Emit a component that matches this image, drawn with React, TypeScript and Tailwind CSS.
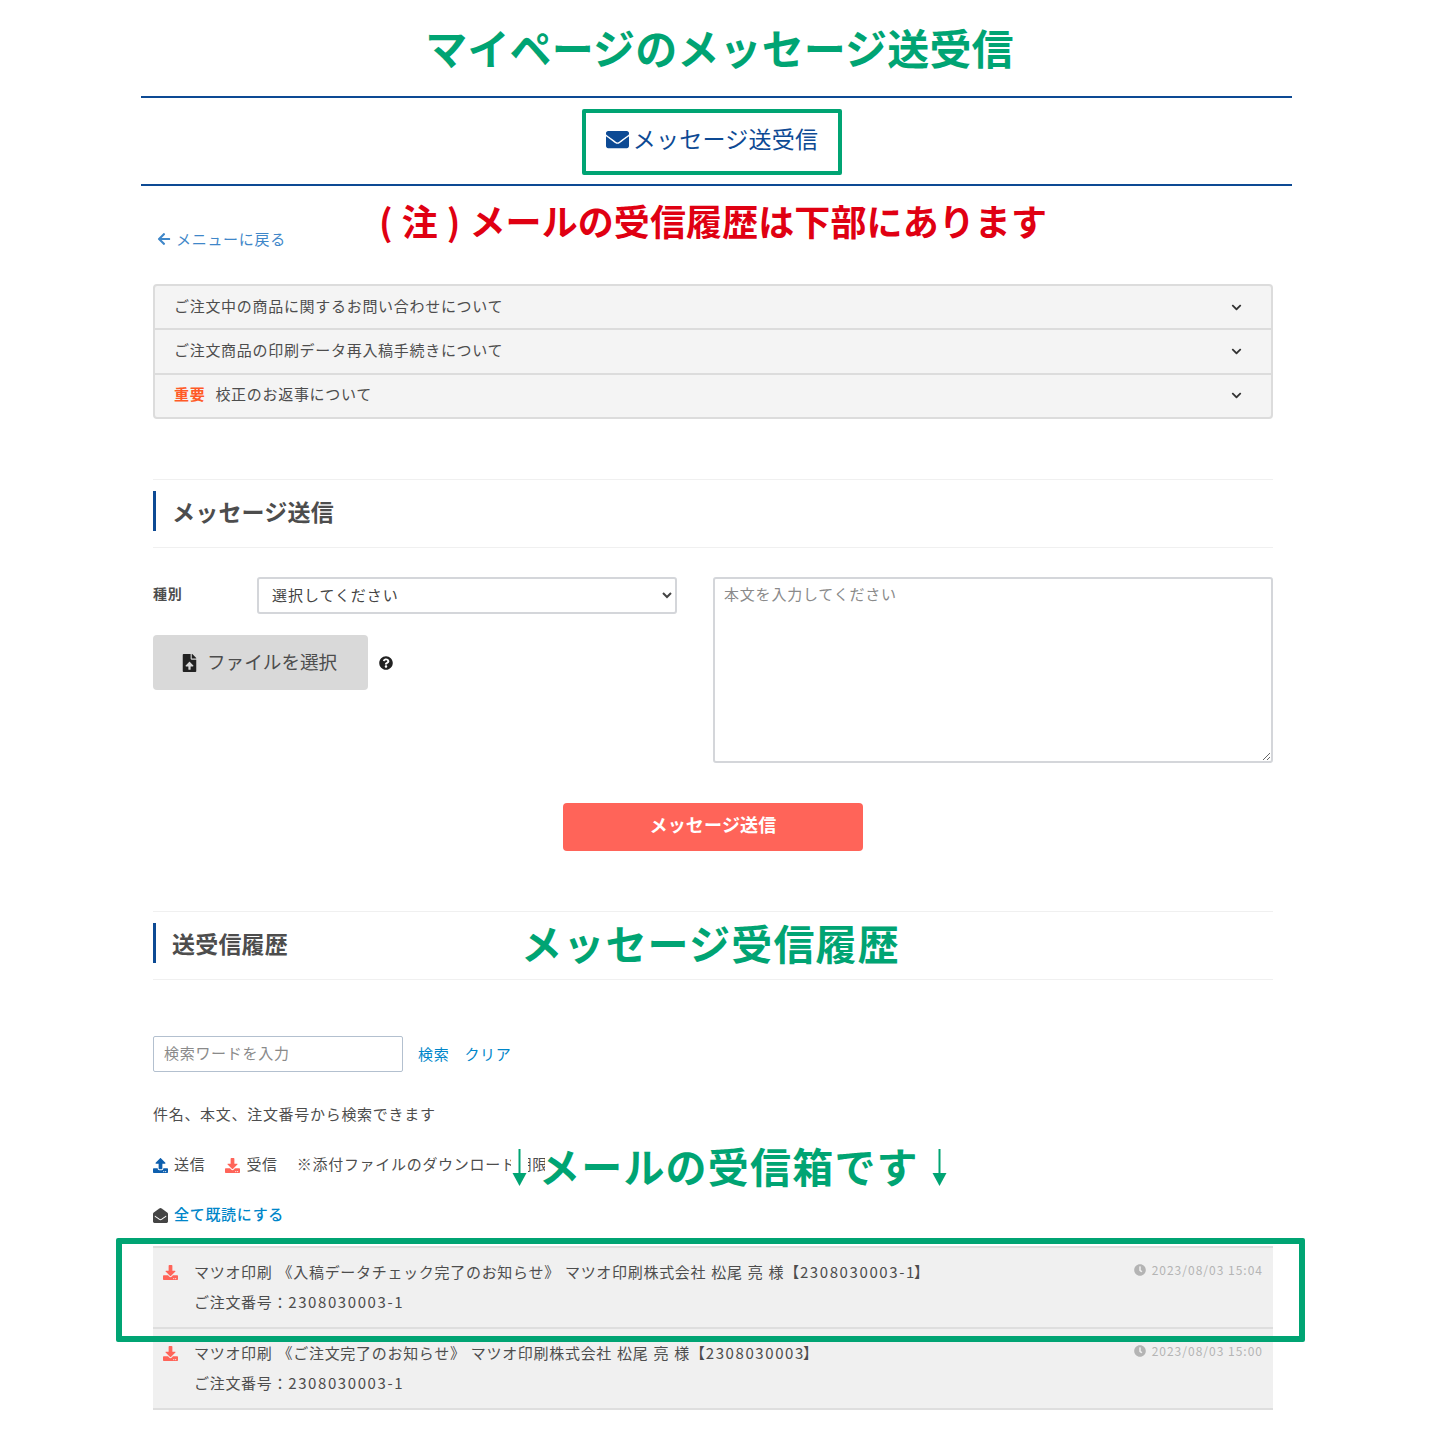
import React from 'react';
import { FaArrowLeft, FaChevronDown, FaClock, FaDownload, FaEnvelope, FaEnvelopeOpen, FaFileUpload, FaQuestionCircle, FaUpload } from 'react-icons/fa';

const messages = [
  { subject: 'マツオ印刷 《入稿データチェック完了のお知らせ》', number: '2308030003-1', date: '2023/08/03 15:04' },
  { subject: 'マツオ印刷 《ご注文完了のお知らせ》', number: '2308030003', date: '2023/08/03 15:00' }
];

function SectionHeading({ label }: { label: string }) {
  return <div className="h-[69px] border-y border-[#f0f0f0] flex items-center">
      <h2 className="mb-[6px] h-10 border-l-[3px] border-[#0d4a94] pl-[16px] pt-[2px] flex items-center text-[23px] font-bold tracking-[0.2px] text-[#4d4d4d]">
        {label}
      </h2>
    </div>;
}

function DownArrow() {
  return <svg width="17" height="38" viewBox="0 0 17 38" className="bg-white">
      <path d="M8.5 0v27" stroke="#00a473" strokeWidth="2" />
      <path d="M1.5 24h14l-7 13z" fill="#00a473" />
    </svg>;
}

export default function App() {
  return <div className="relative h-[1451px] w-[1441px] bg-white overflow-hidden font-['Noto_Sans_CJK_JP',sans-serif] text-[15px] tracking-[0.7px] text-[#4d4d4d]">
      <div className="ml-[141px] w-[1151px]">
        <h1 className="h-[96px] pb-[4px] pl-[6px] flex items-center justify-center text-[42px] font-bold tracking-[0.15px] text-[#00a473]">
          マイページのメッセージ送受信
        </h1>
        <div className="h-[90px] border-y-2 border-[#0d4a94] flex items-center justify-center">
          <div className="w-[260px] h-[66px] mt-[2px] mr-[9px] pb-[8px] border-4 border-[#00a473] rounded-[2px] flex items-center justify-center gap-[4px] text-[23px] tracking-[0.25px] text-[#0d4a94]">
            <FaEnvelope className="mt-[2px] w-[23px] h-[23px]" />
            <span>メッセージ送受信</span>
          </div>
        </div>

        <div className="ml-3 w-[1120px]">
          <a className="mt-[42px] h-[22px] flex items-center gap-[5px] ml-1 text-[#3f87c9]">
            <FaArrowLeft className="w-[14px] h-[14px]" />
            <span>メニューに戻る</span>
          </a>

          <div className="mt-[34px] h-[135px] border-2 border-[#dcdcdc] rounded-[4px] bg-[#f4f4f4] flex flex-col divide-y-2 divide-[#dcdcdc]">
            <div className="flex-1 flex items-center justify-between pl-[19px] pr-[29px]">
              <span className="mb-[1px]">ご注文中の商品に関するお問い合わせについて</span>
              <FaChevronDown className="w-[11px] h-[11px] text-[#333]" />
            </div>
            <div className="flex-1 flex items-center justify-between pl-[19px] pr-[29px]">
              <span className="mb-[3px]">ご注文商品の印刷データ再入稿手続きについて</span>
              <FaChevronDown className="w-[11px] h-[11px] text-[#333]" />
            </div>
            <div className="flex-1 flex items-center justify-between pl-[19px] pr-[29px]">
              <span className="mb-[3px]">
                <b className="mr-[10px] text-[#ff5a26]">重要</b>
                校正のお返事について
              </span>
              <FaChevronDown className="w-[11px] h-[11px] text-[#333]" />
            </div>
          </div>

          <div className="mt-[60px]">
            <SectionHeading label="メッセージ送信" />
          </div>

          <div className="mt-[29px] flex justify-between">
            <div className="w-[524px]">
              <div className="flex items-center">
                <label className="w-[104px] pb-[4px] text-[14px] font-bold">種別</label>
                <select defaultValue="" className="w-[420px] h-[37px] border-2 border-[#d4d6da] rounded-[3px] bg-white pl-[9px] pb-[2px] text-[15px] tracking-[0.95px] text-[#444]">
                  <option value="">選択してください</option>
                </select>
              </div>
              <div className="mt-[21px] flex items-center">
                <button className="w-[215px] h-[55px] rounded-[4px] bg-[#d9d9d9] flex items-center pl-[29px] gap-[10px] text-[18.6px] tracking-normal">
                  <FaFileUpload className="w-[15px] h-[18px] text-[#222]" />
                  <span className="pb-[4px]">ファイルを選択</span>
                </button>
                <FaQuestionCircle className="ml-[11px] w-[14px] h-[14px] text-[#222]" />
              </div>
            </div>
            <textarea placeholder="本文を入力してください" className="w-[560px] h-[186px] border-2 border-[#d4d6da] rounded-[3px] px-[9px] py-[4px] tracking-[0.8px] placeholder:text-[#8a8a8a]" />
          </div>

          <button className="mt-[40px] ml-[410px] pb-[6px] w-[300px] h-[48px] block rounded-[4px] bg-[#ff6459] text-[18px] font-bold tracking-[0.2px] text-white">
            メッセージ送信
          </button>

          <div className="mt-[60px]">
            <SectionHeading label="送受信履歴" />
          </div>

          <div className="mt-[56px] flex items-center">
            <input placeholder="検索ワードを入力" className="w-[250px] h-[36px] border border-[#b3c0cf] rounded-[2px] px-[10px] pb-[4px] placeholder:text-[#8a8a8a]" />
            <a className="ml-[15px] text-[#0086c9]">検索</a>
            <a className="ml-[15px] text-[#0086c9]">クリア</a>
          </div>

          <p className="mt-[30px] h-[24px] leading-[24px]">件名、本文、注文番号から検索できます</p>

          <div className="mt-[26px] h-[24px] flex items-center">
            <FaUpload className="mt-[2px] w-[15px] h-[15px] text-[#0d5fae]" />
            <span className="ml-[6px]">送信</span>
            <FaDownload className="mt-[2px] ml-[20px] w-[15px] h-[15px] text-[#ff6459]" />
            <span className="ml-[6px]">受信</span>
            <span className="ml-[19px]">※添付ファイルのダウンロード期限</span>
          </div>

          <div className="mt-[26px] h-[24px] flex items-center">
            <FaEnvelopeOpen className="mt-[2px] w-[15px] h-[15px] text-[#444]" />
            <a className="ml-[6px] font-medium text-[#0086c9]">全て既読にする</a>
          </div>

          <ul className="mt-[20px]">
            {messages.map(message => <li key={message.date} className="h-[81px] border-t-2 border-[#dedede] bg-[#f0f0f0] flex pt-[9px] pl-[10px] pr-[10px] last:h-[83px] last:border-b-2">
                <FaDownload className="mt-[8px] w-[15px] h-[15px] shrink-0 text-[#ff6459]" />
                <div className="ml-[16px] flex-1 leading-[30px]">
                  <p className="[word-spacing:1px]">
                    {message.subject} マツオ印刷株式会社 松尾 亮 様【<span className="tracking-[1.6px]">{message.number}</span><span className="-ml-[2px]">】</span>
                  </p>
                  <p>ご注文番号：<span className="tracking-[1.6px]">2308030003-1</span></p>
                </div>
                <div className="mt-[5px] h-[16px] flex items-center gap-[6px] text-[12px] tracking-[1px] text-[#b4b4b4]">
                  <FaClock className="w-3 h-3" />
                  <span>{message.date}</span>
                </div>
              </li>)}
          </ul>
        </div>
      </div>

      {/* annotations pasted over the capture */}
      <p className="absolute left-[379px] top-[193px] text-[36px] font-bold tracking-[0.1px] [word-spacing:0.7px] text-[#e00012] whitespace-nowrap">
        ( 注 ) メールの受信履歴は下部にあります
      </p>
      <p className="absolute left-[521px] top-[912px] text-[41px] font-bold tracking-[1.2px] text-[#00a473] whitespace-nowrap">
        メッセージ受信履歴
      </p>
      <div className="absolute left-[511px] top-[1135px] flex items-start">
        <div className="mt-[14px]"><DownArrow /></div>
        <p className="ml-[17px] flex items-center bg-white text-[41px] font-bold tracking-[1.2px] text-[#00a473] whitespace-nowrap">
          <span className="-ml-[6px]">メールの受信箱です</span>
          <span className="ml-[12px] mt-[5px]"><DownArrow /></span>
        </p>
      </div>
      <div className="absolute left-[116px] top-[1238px] w-[1189px] h-[104px] border-[6px] border-[#00a473] rounded-[2px] pointer-events-none" />
    </div>;
}
